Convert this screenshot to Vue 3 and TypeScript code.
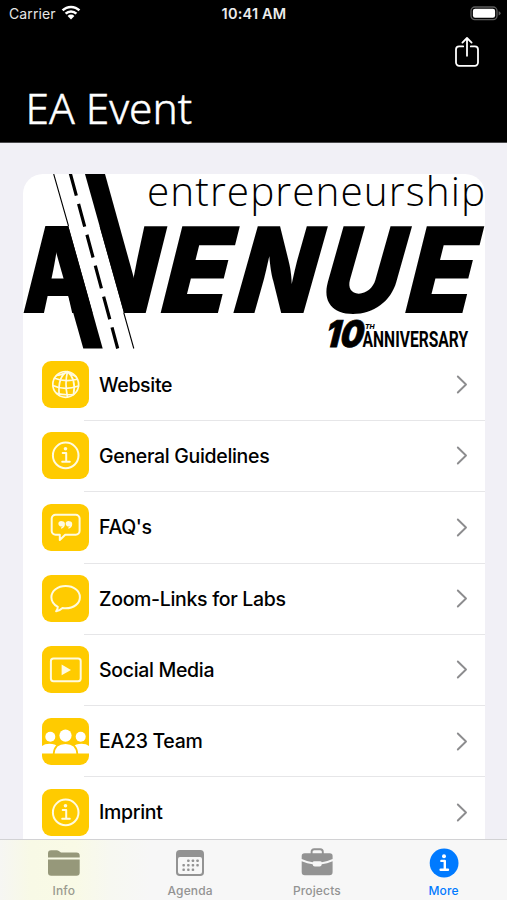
<script setup lang="ts">
type IconName = 'globe' | 'info' | 'quote' | 'bubble' | 'play' | 'team'
type TabIcon = 'folder' | 'calendar' | 'briefcase' | 'info'

interface MenuItem {
  label: string
  icon: IconName
}

interface Tab {
  label: string
  icon: TabIcon
  active?: boolean
}

const items: MenuItem[] = [
  { label: 'Website', icon: 'globe' },
  { label: 'General Guidelines', icon: 'info' },
  { label: "FAQ's", icon: 'quote' },
  { label: 'Zoom-Links for Labs', icon: 'bubble' },
  { label: 'Social Media', icon: 'play' },
  { label: 'EA23 Team', icon: 'team' },
  { label: 'Imprint', icon: 'info' },
]

const tabs: Tab[] = [
  { label: 'Info', icon: 'folder' },
  { label: 'Agenda', icon: 'calendar' },
  { label: 'Projects', icon: 'briefcase' },
  { label: 'More', icon: 'info', active: true },
]

// Day dots of the calendar glyph: the first row starts one column later.
const days = [
  [14.1, 11.5], [18.7, 11.5], [23.3, 11.5],
  [9.4, 16], [14.1, 16], [18.7, 16], [23.3, 16],
  [9.4, 20.6], [14.1, 20.6], [18.7, 20.6],
]
</script>

<template>
  <div class="screen">
    <header class="header">
      <div class="status">
        <div class="carrier">
          <span>Carrier</span>
          <svg class="wifi" width="20" height="15" viewBox="0 0 20 15">
            <g fill="none" stroke="#fff" stroke-width="2.5">
              <path d="M1.6 5.4a11.9 11.9 0 0 1 16.8 0" />
              <path d="M4.6 8.6a7.7 7.7 0 0 1 10.8 0" />
            </g>
            <path d="M6.6 11a4.8 4.8 0 0 1 6.8 0L10 14.4z" fill="#fff" />
          </svg>
        </div>
        <span class="clock">10:41 AM</span>
        <svg class="battery" width="31" height="15" viewBox="0 0 31 15">
          <rect x="1" y="1" width="26" height="12.6" rx="3.8" fill="none" stroke="#5c5c5c" stroke-width="1.3" />
          <rect x="2.9" y="2.8" width="22.2" height="9" rx="2.2" fill="#fff" />
          <path d="M28.6 5.2q2 .7 2 2.1t-2 2.1z" fill="#5c5c5c" />
        </svg>
      </div>
      <div class="nav">
        <svg class="share" width="26" height="32" viewBox="0 0 26 32">
          <g fill="none" stroke="#fff" stroke-width="1.8" stroke-linecap="round" stroke-linejoin="round">
            <path d="M9.2 10.4H5.2A3.2 3.2 0 0 0 2 13.6V26.6A3.2 3.2 0 0 0 5.2 29.8H20.8A3.2 3.2 0 0 0 24 26.6V13.6A3.2 3.2 0 0 0 20.8 10.4H16.8" />
            <path d="M13 19.8V2.2M8.4 6.6L13 2l4.600 4.600" />
          </g>
        </svg>
      </div>
      <h1 class="title">EA Event</h1>
    </header>

    <main class="content">
      <section class="card">
        <svg class="logo" width="462" height="176" viewBox="23 174 462 176">
          <text class="tagline" x="147" y="206.2" textLength="338">entrepreneurship</text>
          <g class="wordmark">
            <text transform="matrix(.775 0 0 1 21.4 312.7)">A</text>
            <text transform="matrix(.88 0 .035 1 89.5 312.7)">V</text>
            <text transform="matrix(.92 0 -.25 1 155.5 312.7)">E</text>
            <text transform="matrix(.87 0 -.282 1 228.4 312.7)">N</text>
            <text transform="matrix(.915 0 -.282 1 314 312.7)">U</text>
            <text transform="matrix(.92 0 -.25 1 400 312.7)">E</text>
          </g>
          <!-- road running diagonally through the wordmark -->
          <path d="M53.700 174H85L134 348.500H102.700z" fill="#fff" />
          <path d="M48.700 226H68.300L102.700 348.500H83.300z" />
          <path d="M85 174H105L143.500 312.700H123.900z" />
          <g fill="none" stroke="#000">
            <path d="M53.700 174L68.500 226M123.700 312.500L133.800 348.500" stroke-width="1.100" />
            <path d="M70.200 173L117.700 348.500" stroke-width="3.200" stroke-dasharray="23.500 8.500" />
          </g>
          <text class="ten" transform="matrix(.88 0 -.25 1 323.500 347)">10</text>
          <text class="th" x="365" y="328.600" textLength="9.500">TH</text>
          <text class="anniversary" transform="matrix(.698 0 0 1 362.600 346.500)">ANNIVERSARY</text>
        </svg>

        <ul class="menu">
          <li v-for="item in items" :key="item.label" class="row">
            <svg class="tile" width="47" height="47" viewBox="0 0 47 47">
              <g fill="none" stroke="#fffbe0" stroke-width="2" stroke-linecap="round" stroke-linejoin="round">
                <g v-if="item.icon === 'globe'" stroke-width="1.700">
                  <circle cx="23.700" cy="23.400" r="12.900" />
                  <path d="M12.500 17.200Q23 21.500 35.300 18.200M10.900 24.500Q22 30 36.500 25M14.600 32.400Q22 34.300 31.500 33.500" />
                  <path d="M25.500 10.600Q15.500 15 17.200 34.500M25.500 10.600Q22.500 22 25.500 36.200M25.500 10.600Q34.500 18 31.500 33.500M14.500 14.500Q19 14.500 25.500 10.600Q29.500 14 34 15.500" />
                </g>
                <g v-else-if="item.icon === 'info'">
                  <circle cx="23.700" cy="23.400" r="12.800" />
                  <path d="M20.700 20.900H24.200V29.600M20.200 29.800H27.800" />
                  <circle cx="23.500" cy="16.700" r="1.800" fill="#fffbe0" stroke="none" />
                </g>
                <g v-else-if="item.icon === 'quote'">
                  <path d="M13.500 10.800H33.800a3.800 3.800 0 0 1 3.800 3.800V26.900a3.800 3.800 0 0 1-3.800 3.800H23.200L17.800 36V30.700H13.500a3.800 3.800 0 0 1-3.800-3.800V14.600a3.800 3.800 0 0 1 3.800-3.800z" />
                  <g fill="#fffbe0" stroke="none">
                    <path d="M20.100 17.300a2.800 2.800 0 0 1 2.800 2.900q0 3.400-3.600 4.500l-.5-.9q1.500-.7 1.800-1.800a2.700 2.700 0 1 1-.5-4.700z" />
                    <path d="M27.400 17.300a2.800 2.800 0 0 1 2.800 2.900q0 3.400-3.600 4.500l-.5-.9q1.500-.7 1.800-1.800a2.700 2.700 0 1 1-.5-4.700z" />
                  </g>
                </g>
                <path
                  v-else-if="item.icon === 'bubble'"
                  d="M23.700 11.100C31.800 11.100 37.900 15.900 37.900 22.200S31.800 33.300 23.700 33.300q-1.700 0-3.200-.3-2.700 2.600-6.400 3.300 1.700-2.200 1.700-4.500C11.900 29.700 9.400 26.300 9.400 22.200 9.400 15.900 15.600 11.100 23.700 11.100z"
                />
                <g v-else-if="item.icon === 'play'">
                  <rect x="8.900" y="12.500" width="29.800" height="22.700" rx="2.600" />
                  <path d="M19.600 18.600V29.200L29 23.900z" fill="#fffbe0" stroke="none" />
                </g>
                <g v-else fill="#fff" stroke="none">
                  <circle cx="8.300" cy="18.700" r="5" />
                  <circle cx="38.700" cy="18.700" r="5" />
                  <path d="M-3 35.400q0-9.600 10.500-9.600 5.500 0 9 3.200V35.400zM50 35.400q0-9.600-10.500-9.600-5.500 0-9 3.200V35.400z" />
                  <circle cx="23.500" cy="17.600" r="6.100" />
                  <path d="M11.600 36.300q.6-11.200 11.900-11.200t11.900 11.200z" stroke="#ffcb00" stroke-width="1.800" />
                </g>
              </g>
            </svg>
            <div class="cell">
              <span class="label">{{ item.label }}</span>
              <svg class="chevron" width="12" height="19" viewBox="0 0 12 19">
                <path d="M1.800 1.500L10 9.500L1.800 17.500" fill="none" stroke="#8c8c8e" stroke-width="1.900" stroke-linecap="round" stroke-linejoin="round" />
              </svg>
            </div>
          </li>
        </ul>
      </section>
    </main>

    <nav class="tabs">
      <div v-for="tab in tabs" :key="tab.label" class="tab" :class="[tab.icon, { active: tab.active }]">
        <svg class="glyph" width="34" height="30" viewBox="0 0 34 30" fill="currentColor">
          <g v-if="tab.icon === 'folder'">
            <path d="M1 9.600V5.200Q1 2.200 4 2.200H9.600Q11 2.200 12.200 3.200L14 4.600H29.400Q32.700 4.600 32.700 7.800V9.600z" />
            <path d="M1 11.400H32.700V24.600Q32.700 27.800 29.500 27.800H4.200Q1 27.800 1 24.600z" />
          </g>
          <g v-else-if="tab.icon === 'calendar'">
            <path fill-rule="evenodd" d="M6.800 2.100H27.200Q31 2.100 31 5.900V24.200Q31 28 27.200 28H6.800Q3 28 3 24.200V5.900Q3 2.100 6.800 2.100zM7 8.900Q5 8.900 5 10.900V23.900Q5 26 7 26H27Q29 26 29 23.900V10.900Q29 8.900 27 8.900z" />
            <rect v-for="[x, y] in days" :key="`${x}-${y}`" :x="x" :y="y" width="2.500" height="2.500" rx=".8" />
          </g>
          <g v-else-if="tab.icon === 'briefcase'">
            <path d="M11.600 6V3.800Q11.600 1.200 14.200 1.200H20.200Q22.800 1.200 22.800 3.800V6" fill="none" stroke="currentColor" stroke-width="1.900" />
            <path d="M4.600 5.300H29.800Q32.600 5.300 32.600 8.100V10.900Q26.800 13.500 21.800 14.200 21.400 13.200 20.200 13.200H14.200Q13 13.200 12.600 14.200 7.500 13.500 1.700 10.900V8.100Q1.700 5.300 4.600 5.300z" />
            <path d="M1.700 13.200Q7.500 15.600 12.600 16.200 12.900 18.400 14.800 18.400H19.600Q21.500 18.400 21.800 16.200 27 15.600 32.600 13.200V24Q32.600 27.200 29.400 27.200H4.900Q1.700 27.200 1.700 24z" />
          </g>
          <g v-else>
            <circle cx="17.100" cy="15" r="14.400" />
            <path d="M14.400 12.900H17.800V21.600M13.600 21.800H21" fill="none" stroke="#fff" stroke-width="2.400" stroke-linecap="round" stroke-linejoin="round" />
            <circle cx="17" cy="8.300" r="2" fill="#fff" />
          </g>
        </svg>
        <span class="name">{{ tab.label }}</span>
      </div>
    </nav>
  </div>
</template>

<style>
body {
  background: #f1f0f6;
}
</style>

<style scoped>
.screen {
  display: flex;
  flex-direction: column;
  width: 507px;
  height: 900px;
  overflow: hidden;
  background: #f1f0f6;
  color: #000;
  font-family: Inter, "Liberation Sans", sans-serif;
}

.header {
  flex: none;
  box-sizing: border-box;
  height: 143px;
  background: #000;
  border-bottom: 1px solid #4a4a4c;
  color: #fff;
}

.status {
  display: grid;
  grid-template-columns: 1fr auto 1fr;
  align-items: center;
  height: 27px;
  padding: 0 6px 0 9px;
}

.carrier {
  display: flex;
  align-items: center;
  gap: 6px;
  color: #e6e6e6;
  font-size: 14px;
  letter-spacing: 0.1px;
}

.wifi {
  margin: -3px 0 0 -1px;
}

.clock {
  padding-right: 2px;
  font-size: 14.5px;
  font-weight: 600;
  letter-spacing: 0.2px;
  color: #ececec;
}

.battery {
  justify-self: end;
}

.nav {
  display: flex;
  justify-content: flex-end;
  padding: 9px 27px 0 0;
}

.share {
  display: block;
}

.title {
  margin: 0;
  padding: 10px 0 0 25.5px;
  font: 300 42.4px/60px "Noto Sans", "Open Sans", sans-serif;
  -webkit-text-stroke: 0.5px #fff;
}

.content {
  flex: 1;
  min-height: 0;
  padding: 31px 22px 0 23px;
  overflow: hidden;
}

.card {
  height: 720px;
  overflow: hidden;
  background: #fff;
  border-radius: 20px 20px 0 0;
}

.logo {
  display: block;
}

.tagline {
  font: 300 40.5px "Open Sans", sans-serif;
}

.wordmark {
  font: 900 119.2px Inter, sans-serif;
}

.ten {
  font: 900 36.8px Inter, sans-serif;
  stroke: #000;
  stroke-width: 0.8px;
}

.th {
  font: italic 800 6.8px Inter, sans-serif;
}

.anniversary {
  font: 700 22.4px Roboto, sans-serif;
}

.menu {
  margin: -1px 0 0;
  padding: 0;
  list-style: none;
}

.row {
  display: flex;
  align-items: center;
  gap: 10px;
  height: 71.3px;
  padding-left: 19px;
}

.tile {
  flex: none;
  border-radius: 9px;
  background: #ffcb00;
}

.cell {
  position: relative;
  display: flex;
  flex: 1;
  align-items: center;
  justify-content: space-between;
  height: 100%;
  padding-right: 17.5px;
}

/* hairline separator starts slightly under the tile */
.cell::after {
  position: absolute;
  right: 0;
  bottom: -0.7px;
  left: -14.6px;
  height: 1px;
  background: #e6e6e8;
  content: "";
}

.label {
  font-size: 19.5px;
  font-weight: 500;
  letter-spacing: -0.32px;
}

.tabs {
  flex: none;
  display: grid;
  grid-template-columns: repeat(4, 1fr);
  box-sizing: border-box;
  height: 61px;
  border-top: 1px solid #d2d2d4;
  background: linear-gradient(90deg, #f6f6f3 0, #f8f9e6 30px, #f9fae6 75px, #f7f8f1 110px, #f7f7f7 150px);
}

.tab {
  display: flex;
  flex-direction: column;
  align-items: center;
  padding-top: 8px;
  color: #939393;
}

.tab.folder {
  padding-left: 1px;
  color: #96987a;
}

.tab.active {
  color: #007aff;
}

.glyph {
  display: block;
}

.name {
  margin-top: 5px;
  font-size: 12px;
  font-weight: 500;
  line-height: 15px;
  letter-spacing: 0.15px;
}

.folder .name {
  color: #9a9b90;
}
</style>
